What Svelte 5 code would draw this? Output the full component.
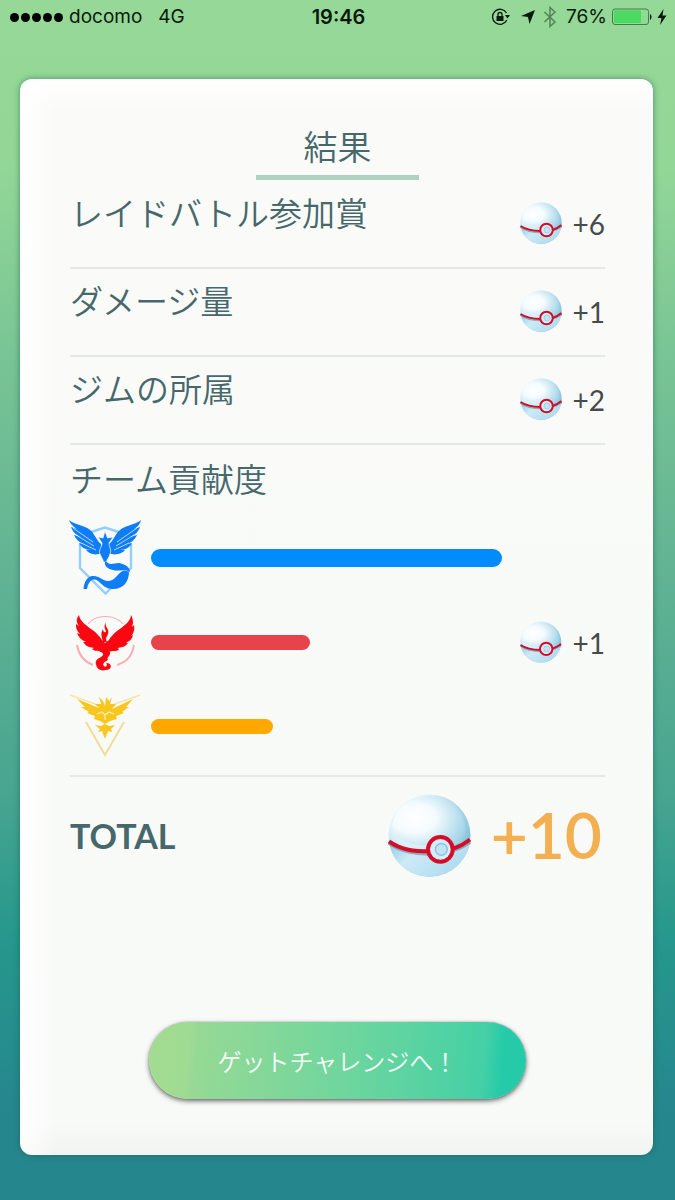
<script>
  const rewards = [
    { label: 'レイドバトル参加賞', amount: 6 },
    { label: 'ダメージ量', amount: 1 },
    { label: 'ジムの所属', amount: 2 },
  ];
  const teams = [
    { id: 'mystic', share: 95, thick: 18, color: '#008cff' },
    { id: 'valor', share: 43, thick: 15, color: '#e8424a', amount: 1 },
    { id: 'instinct', share: 33, thick: 15, color: '#ffa800' },
  ];
</script>

{#snippet ball(cls)}
  <svg class={cls} viewBox="0 0 84 84" aria-hidden="true">
    <defs>
      <radialGradient id="shell" cx="0.32" cy="0.3" r="0.8">
        <stop offset="0" stop-color="#ffffff" />
        <stop offset="0.35" stop-color="#e6f5fb" />
        <stop offset="0.7" stop-color="#a9d8ea" />
        <stop offset="1" stop-color="#6fb4d0" />
      </radialGradient>
      <linearGradient id="base" x1="0" y1="0" x2="1" y2="0.5">
        <stop offset="0" stop-color="#8ecae3" />
        <stop offset="0.4" stop-color="#cdeaf6" />
        <stop offset="1" stop-color="#aedcf0" />
      </linearGradient>
      <radialGradient id="shine" cx="0.3" cy="0.45" r="0.75">
        <stop offset="0" stop-color="#ffffff" />
        <stop offset="0.4" stop-color="#f4fbfe" />
        <stop offset="1" stop-color="#a5d5e8" stop-opacity="0.6" />
      </radialGradient>
    </defs>
    <circle cx="42" cy="42" r="41.5" fill="url(#shell)" />
    <path d="M1 47 C14 60 28 60 45 60 C62 60 74 54 83 47 C81 67 64 83.500 42 83.500 C20 83.500 3 68 1 47Z" fill="url(#base)" />
    <path d="M5 39 C1 15 24 1 43 2 C67 3 82 24 77 42 C68 53 57 48 52 43 C45 44 42 49 40 52 C25 52 12 49 5 39Z" fill="url(#shine)" />
    <path d="M1 49 C14 58 27 60 42 60 C59 60 73 55 83 48" fill="none" stroke="#56717f" stroke-width="5" opacity="0.5" />
    <path d="M1 48 C14 57 27 58 42 58 C59 59 73 54 83 46" fill="none" stroke="#d60d29" stroke-width="4" />
    <circle cx="53" cy="56" r="12.500" fill="#d5effa" stroke="#d60d29" stroke-width="4" />
    <circle cx="54" cy="56" r="6" fill="#c2e5f6" stroke="#91c5e1" stroke-width="1.500" />
  </svg>
{/snippet}

{#snippet emblem(id)}
  {#if id === 'mystic'}
    <svg class="emblem" viewBox="0 -2 100 100" role="img" aria-label="Mystic">
      <path d="M31 22 L45 17.500 L59 22 M71 34 V58 L45.500 83.500 L20 58 V34" fill="none" stroke="#92cfff" stroke-width="2.400" />
      <path d="M9 10 C15 15 24 15 30 20 C35 24 36 30 41 34 L41 43 C36 46 29 44 26 40 L31 40 C25 40 21 37 19 33 L25 34 C19 33 16 29 14 25 L21 27 C15 25 12 20 11 17 L17 19 C12 16 10 13 9 10Z" fill="#0f7df5" />
      <path d="M81 10 C75 15 66 15 60 20 C55 24 54 30 49 34 L49 43 C54 46 62 44 65 40 L60 40 C66 40 70 37 72 33 L66 34 C72 33 75 29 77 25 L70 27 C76 25 79 20 80 17 L74 19 C79 16 80 13 81 10Z" fill="#0f7df5" />
      <path d="M13 18 L33 32 M16 25 L34 36 M21 33 L36 40 M77 18 L57 32 M74 25 L56 36 M69 33 L54 40" stroke="#fafafa" stroke-width="0.700" />
      <path d="M45 21 L47.500 28 L53 27 L49 33 C49 37 52 40 50 44 C49 48 47 49 46.500 52 L43.500 52 C43 49 41 47 40 44 C38 40 42 37 42 33 L38 27 L43 28Z" fill="#0f7df5" stroke="#fafafa" stroke-width="0.700" />
      <path d="M46 51 C49 56 54 53 59 53 C65 54 70 57 70 62 C65 58 58 62 53 60 C48 59 44 56 45 52Z" fill="#0f7df5" />
      <path d="M69 62 C69 71 64 79 53 79 C45 79 42 74 38 71 C34 68 30 70 28 75 L27 79 L23.500 79 C24 72 27 67 32 66 C39 65 42 71 49 71 C57 70 58 61 65 60.500Z" fill="#0f7df5" />
    </svg>
  {:else if id === 'valor'}
    <svg class="emblem" viewBox="0 0 100 100" role="img" aria-label="Valor">
      <path d="M28 32 C36 22 55 22 63 32" fill="none" stroke="#f9a9ad" stroke-width="1.200" />
      <path d="M17 53 C19 65 25 70 33 73 M74 53 C72 65 66 70 57 73" fill="none" stroke="#f6afb2" stroke-width="2" />
      <path d="M19 23 C21 34 35 36 42 48 L45 51 L49 48 C56 36 70 34 71 23 C74 29 73 32 72 35 L74 33 C75 39 73 42 71 44 L73 43 C72 48 69 49 66 51 L68 51 C65 56 60 55 58 56 L59 58 C54 60 52 58 49 60 L45 63 L41 60 C37 58 36 60 32 57 L34 56 C28 55 26 54 23 50 L26 50 C20 47 19 45 17 41 L20 42 C16 38 16 35 16 32 L19 34 C16 30 16 27 19 23Z" fill="#fb0711" />
      <path d="M46 30 C44 35 50 37 48 42 C47 45 45 46 47 50 L43 50 C42 45 40 42 43 37 C43 41 46 41 46 39 C44 36 44 33 46 30Z" fill="#fb0711" />
      <path d="M44 58 L50 60 C51 64 46 65 48 68 C44 70 42 72 44 74 C46 76 48 73 46 71 C53 71 52 78 46 78 C40 80 34 75 37 70 L36 73 C34 66 42 66 43 63Z" fill="#fb0711" />
    </svg>
  {:else}
    <svg class="emblem" viewBox="0 0 100 100" role="img" aria-label="Instinct">
      <path d="M26 46 L45 79 L64 46" fill="none" stroke="#f3dc96" stroke-width="2" />
      <path d="M10 19 L38 29 M80 19 L52 29" stroke="#f7e4a7" stroke-width="1.400" />
      <path d="M45 30 L46 21 L49 25 L52 21 L50 28 L56 28 L52 33 L73 23 L66 31 L69 31 L62 36 L64 37 L56 40 L57 43 L50 45 L45 48 L40 45 L34 43 L35 40 L27 37 L29 36 L21 31 L25 31 L17 23 L39 32 L35 28 L41 28 L39 21 L43 25Z" fill="#f9c61d" />
      <path d="M37 38 L42 36 L45 39 L49 36 L54 38 M45 39 V44" fill="none" stroke="#fff3bb" stroke-width="1.200" />
      <path d="M45 48 L49 50 L55 49 L51 53 L52 56 L48 55 L45 63 L42 55 L38 56 L40 53 L35 49 L41 50Z" fill="#f9c61d" />
    </svg>
  {/if}
{/snippet}

<div class="screen">
  <header class="status">
    <div class="carrier">
      <span class="signal"><i></i><i></i><i></i><i></i><i></i></span>
      <span>docomo</span>
      <span class="network">4G</span>
    </div>
    <time>19:46</time>
    <div class="indicators">
      <svg width="20" height="18" viewBox="0 0 20 18" aria-hidden="true">
        <path d="M15.500 5 A7.500 7.500 0 1 0 15.800 12" fill="none" stroke="#0b180c" stroke-width="1.300" />
        <path d="M14 7 H19 L16.500 10.500Z M5.500 8 H12.500 V13 H5.500Z" fill="#0b180c" />
        <path d="M7 8 V6.500 A2 2 0 0 1 11 6.500 V8" fill="none" stroke="#0b180c" stroke-width="1.300" />
      </svg>
      <svg class="location" width="16" height="16" viewBox="0 0 16 16" aria-hidden="true">
        <path d="M15 1 L9.500 15 L8 8 L1 7Z" fill="#0b180c" />
      </svg>
      <svg class="bluetooth" width="14" height="22" viewBox="0 0 14 22" aria-hidden="true">
        <path d="M1.500 6 L12 16 L7 20.500 V1.500 L12 6 L1.500 16" fill="none" stroke="#55825a" stroke-width="1.500" />
      </svg>
      <span>76%</span>
      <svg width="40" height="18" viewBox="0 0 40 18" aria-hidden="true">
        <rect x="0.500" y="1" width="36" height="15.500" rx="2.500" fill="#8edb94" stroke="#467b4b" />
        <rect x="2" y="2.500" width="27" height="12.500" rx="1" fill="#4bd964" />
        <path d="M38 6 C40 7 40 11 38 12Z" fill="#0b180c" />
      </svg>
      <svg width="10" height="16" viewBox="0 0 10 16" aria-hidden="true">
        <path d="M6.500 0 L0.500 9 H4.500 L3 16 L9.500 6.500 H5.500Z" fill="#0b180c" />
      </svg>
    </div>
  </header>

  <main class="card">
    <h1>結果</h1>

    <ul class="rewards">
      {#each rewards as reward}
        <li>
          <span class="label">{reward.label}</span>
          <span class="prize">{@render ball('ball')}<span>+{reward.amount}</span></span>
        </li>
      {/each}
    </ul>

    <section class="teams">
      <h2 class="label">チーム貢献度</h2>
      {#each teams as team}
        <div class="team">
          {@render emblem(team.id)}
          <div class="bar" style="width: {team.share}%; height: {team.thick}px; background: {team.color}"></div>
          {#if team.amount}
            <span class="prize">{@render ball('ball')}<span>+{team.amount}</span></span>
          {/if}
        </div>
      {/each}
    </section>

    <section class="total">
      <span class="total-label">TOTAL</span>
      {@render ball('big-ball')}
      <strong>+10</strong>
    </section>

    <button type="button">ゲットチャレンジへ！</button>
  </main>
</div>

<style>
  :global(body) {
    margin: 0;
  }

  .screen {
    box-sizing: border-box;
    min-height: 100vh;
    padding-bottom: 45px;
    display: flex;
    flex-direction: column;
    background: linear-gradient(#95d897 0%, #93d797 14%, #78c495 30%, #5eb193 50%, #48a590 66%, #26988c 78%, #26868e 93%, #26868e 100%);
    color: #46686b;
    font-family: Lato, "Noto Sans CJK JP", sans-serif;
  }

  .status {
    display: grid;
    grid-template-columns: 1fr auto 1fr;
    align-items: center;
    height: 34px;
    padding: 0 8px 0 10px;
    color: #0b180c;
    font: 400 19px/24px Inter, sans-serif;
  }

  .status time {
    font-size: 20px;
    font-weight: 600;
  }

  .carrier,
  .indicators,
  .signal {
    display: flex;
    align-items: center;
  }

  .carrier {
    gap: 6px;
  }

  .network {
    margin-left: 10px;
  }

  .signal {
    gap: 2px;
  }

  .signal i {
    width: 9px;
    height: 9px;
    border-radius: 50%;
    background: #000;
  }

  .indicators {
    justify-content: flex-end;
    gap: 5px;
  }

  .location {
    margin-left: 4px;
  }

  .bluetooth {
    margin: 0 4px 0 2px;
  }

  .card {
    box-sizing: border-box;
    flex: 1;
    display: flex;
    flex-direction: column;
    margin: 45px 22px 0 20px;
    padding: 46px 48px 56px 50px;
    border-radius: 12px;
    background: linear-gradient(90deg, #ffffffcc 0, #ffffff99 14px, #ffffff00 36px), linear-gradient(#ffffff 0, #fafbf9 30px, #f8faf8 97%, #f2f4f1 100%);
    box-shadow: 0 0 6px #1d5f4b99;
  }

  h1 {
    align-self: center;
    box-sizing: border-box;
    width: 163px;
    margin: 0 0 1px;
    padding-bottom: 6px;
    border-bottom: 5px solid #afd1c0;
    font-size: 34px;
    font-weight: 350;
    line-height: 44px;
    text-align: center;
  }

  .rewards {
    margin: 0;
    padding: 0;
    list-style: none;
  }

  .rewards li {
    box-sizing: border-box;
    height: 88px;
    display: flex;
    align-items: flex-start;
    justify-content: space-between;
    padding-top: 12px;
    border-bottom: 2px solid #e6e8e6;
  }

  .label {
    margin: 0;
    font-size: 33px;
    font-weight: 350;
    line-height: 40px;
  }

  .prize {
    display: flex;
    align-items: center;
    gap: 11px;
    color: #454b4b;
    font-size: 28px;
    line-height: 42px;
  }

  .prize span {
    padding-top: 2px;
  }

  .rewards .prize {
    padding-top: 8px;
  }

  .ball {
    width: 42px;
    height: 42px;
  }

  .teams {
    padding: 14px 0 7px;
    border-bottom: 2px solid #e6e8e6;
  }

  .teams h2 {
    margin-bottom: 17px;
  }

  .team {
    display: grid;
    grid-template-columns: 81px 1fr 85px;
    align-items: center;
    height: 84px;
  }

  .emblem {
    width: 100px;
    height: 100px;
    margin: -8px -9px -8px -10px;
  }

  .bar {
    border-radius: 9px;
  }

  .total {
    display: flex;
    align-items: center;
    height: 116px;
    padding-right: 3px;
  }

  .total-label {
    flex: 1;
    font-size: 34px;
    font-weight: 700;
  }

  .big-ball {
    width: 83px;
    height: 83px;
    margin-right: 20px;
  }

  .total strong {
    color: #f3af50;
    font-size: 64px;
    font-weight: 600;
    line-height: 80px;
  }

  button {
    align-self: center;
    width: 377px;
    max-width: 100%;
    height: 77px;
    margin-top: auto;
    padding: 0;
    border: 0;
    border-radius: 39px;
    background: linear-gradient(95deg, #a2dc91 0%, #9fdb92 11%, #96d995 13%, #6fd69d 52%, #45d0a6 88%, #25cba9 93%, #25cba9 100%);
    box-shadow: 0 2px 5px #333b, 0 0 1px #344a;
    color: #f7fffa;
    font: 350 24px/32px "Noto Sans CJK JP", sans-serif;
    cursor: pointer;
  }
</style>
